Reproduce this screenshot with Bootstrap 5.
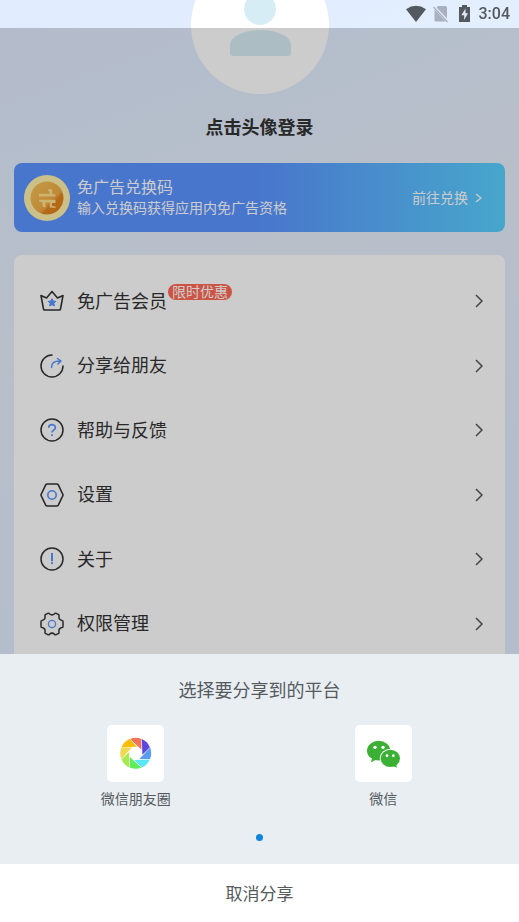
<!DOCTYPE html>
<html lang="zh-CN">
<head>
<meta charset="utf-8">
<meta name="viewport" content="width=device-width, initial-scale=1">
<title>我的</title>
<link href="https://cdn.jsdelivr.net/npm/bootstrap@5.3.0/dist/css/bootstrap.min.css" rel="stylesheet">
<style>
  body { font-family: "Noto Sans CJK SC", sans-serif; color: #333; line-height: 1.5; }
  a, button { color: inherit; }
  .app { background: linear-gradient(160deg, #e0ebff 0%, #e3eefe 18%, #e6effc 32%, #e2edff 60%, #e1edff 100%); }
  .status { height: 28px; font: 500 16px/28px Roboto, sans-serif; color: #54585f; padding-right: 9px; }
  .scrim { position: fixed; inset: 28px 0 0; background: rgba(0, 0, 0, .2); }
  .profile { margin-top: -44px; padding: 0 14px; }
  .avatar { width: 138px; height: 138px; }
  .avatar svg { display: block; width: 100%; height: 100%; }
  .name { font-size: 18px; line-height: 28px; margin: 18px 0 23px; }
  .banner { height: 69px; border-radius: 8px; padding: 0 23px 0 10px; gap: 7px;
            background: linear-gradient(90deg, #5a94ff 0%, #5a94ff 50%, #5aaaff 68%, #59d0ff 100%); }
  .banner-label { padding-bottom: 2px; }
  .banner-title { font-size: 16px; line-height: 21px; }
  .banner-text { font-size: 14px; line-height: 20px; }
  .menu-card { margin-top: 23px; padding: 14px 0; border-radius: 8px; }
  .menu-rows { height: 387px; grid-auto-rows: 1fr; }
  .menu-row { padding: 0 22px 0 26px; font-size: 18px; gap: 13px; }
  .menu-label { padding-bottom: 2px; }
  .tag { font-size: 14px; line-height: 14px; padding: 0 4px 2px; margin: 0 0 18px -12px; background: #ff6a55; }
  .sheet { background: #e9eef3; color: #555a5e; }
  .sheet-title { font-size: 18px; line-height: 28px; padding-top: 21px; margin-bottom: 22px; }
  .targets { padding: 0 12px; }
  .target { font-size: 14px; line-height: 20px; gap: 6px; }
  .tile { width: 57px; height: 57px; border-radius: 5px; }
  .dot { width: 7px; height: 7px; margin: 26px auto 23px; background: #0a86df; }
  .cancel { height: 58px; font-size: 17px; color: #555a5e; }
</style>
<script src="https://cdn.jsdelivr.net/npm/bootstrap@5.3.0/dist/js/bootstrap.bundle.min.js"></script>
</head>
<body>
<div class="app vh-100 overflow-hidden">

  <main class="profile">
    <div class="avatar rounded-circle bg-white mx-auto overflow-hidden">
      <svg viewBox="0 0 138 138" fill="#d7edf6" aria-hidden="true">
        <circle cx="69" cy="53" r="16"/>
        <path d="M39 97V89c0-9 15-15 30.500-15S100 80 100 89v8q0 3-3 3H42q-3 0-3-3z"/>
      </svg>
    </div>
    <h1 class="name fw-bold text-center">点击头像登录</h1>

    <a href="#" class="banner d-flex align-items-center text-white text-decoration-none">
      <svg width="46" height="46" viewBox="0 0 46 46" aria-hidden="true">
        <defs><linearGradient id="coin" x1="0" y1="0" x2="1" y2="1">
          <stop offset="0" stop-color="#f5c35a"/><stop offset=".6" stop-color="#f0ab45"/><stop offset=".68" stop-color="#e08420"/><stop offset="1" stop-color="#e08214"/>
        </linearGradient></defs>
        <circle cx="23" cy="23" r="23" fill="#fff1ac"/>
        <circle cx="23" cy="23" r="16.500" fill="url(#coin)"/>
        <path d="M15 18.800H25.500V16.800L23.500 15.500 25 13.800 28.200 14.800V18.800L31.500 19.500V21.500H15z M31.500 28H31 28V31L31.500 31.500V33L25.800 32.500V27.500H21.500V32.500L18.500 31.500V27.500L15 26.500V24.800H31.500z" fill="#ffe08c"/>
      </svg>
      <span class="banner-label flex-grow-1">
        <span class="banner-title d-block">免广告兑换码</span>
        <span class="banner-text d-block">输入兑换码获得应用内免广告资格</span>
      </span>
      <span class="banner-label banner-text">前往兑换</span>
      <svg width="7" height="10" viewBox="0 0 7 10" fill="none" stroke="#fff" stroke-width="1.400" aria-hidden="true"><path d="M1 1l5 4-5 4"/></svg>
    </a>

    <nav class="menu-card bg-white" aria-label="菜单">
      <div class="menu-rows d-grid">
        <a href="#" class="menu-row d-flex align-items-center text-decoration-none">
          <svg width="24" height="24" viewBox="0 0 24 24" fill="none" stroke="#333" stroke-width="1.600" stroke-linejoin="round" aria-hidden="true"><path d="M1 6.500l5.500 2.500L12 2.500 17.500 9 23 6.500l-2.500 13.500q-.2 1-1.200 1H4.700q-1 0-1.200-1z"/><path d="M12 9.700l1.200 2.300 2.600.4-1.900 1.900.5 2.600-2.400-1.200-2.400 1.200.5-2.600-1.900-1.900 2.600-.4z" fill="#5a94ff" stroke="#5a94ff" stroke-width="1"/></svg>
          <span class="menu-label">免广告会员</span><span class="tag rounded-pill text-white">限时优惠</span>
          <svg class="ms-auto" width="8" height="14" viewBox="0 0 8 14" fill="none" stroke="#555" stroke-width="1.500" aria-hidden="true"><path d="M1 1l6 6-6 6"/></svg>
        </a>
        <a href="#" class="menu-row d-flex align-items-center text-decoration-none">
          <svg width="24" height="24" viewBox="0 0 24 24" fill="none" stroke="#333" stroke-width="1.500" stroke-linecap="round" aria-hidden="true"><path d="M12 1a11 11 0 1 0 11 11"/><path d="M11.500 13.500C11.300 9 14 7 20 7M17.500 4.500L21 7l-3 3" stroke="#5a94ff" stroke-linejoin="round"/></svg>
          <span class="menu-label">分享给朋友</span>
          <svg class="ms-auto" width="8" height="14" viewBox="0 0 8 14" fill="none" stroke="#555" stroke-width="1.500" aria-hidden="true"><path d="M1 1l6 6-6 6"/></svg>
        </a>
        <a href="#" class="menu-row d-flex align-items-center text-decoration-none">
          <svg width="24" height="24" viewBox="0 0 24 24" fill="none" stroke="#333" stroke-width="1.500" aria-hidden="true"><circle cx="12" cy="12" r="11"/><path d="M8.700 9.800C8.700 5.600 15.400 5.600 15.400 9.600c0 2.500-3.400 2.600-3.400 5M12 16.200v1.800" stroke="#5a94ff" stroke-width="1.700"/></svg>
          <span class="menu-label">帮助与反馈</span>
          <svg class="ms-auto" width="8" height="14" viewBox="0 0 8 14" fill="none" stroke="#555" stroke-width="1.500" aria-hidden="true"><path d="M1 1l6 6-6 6"/></svg>
        </a>
        <a href="#" class="menu-row d-flex align-items-center text-decoration-none">
          <svg width="24" height="24" viewBox="0 0 24 24" fill="none" stroke="#333" stroke-width="1.600" stroke-linejoin="round" aria-hidden="true"><path d="M7.200 1h9.600q1 0 1.500.9l4.400 9.100q.5 1 0 2l-4.400 9.100q-.5.900-1.500.900H7.200q-1 0-1.500-.9L1.300 13q-.5-1 0-2l4.400-9.100Q6.200 1 7.200 1z"/><circle cx="12" cy="12" r="4.200" stroke="#5a94ff"/></svg>
          <span class="menu-label">设置</span>
          <svg class="ms-auto" width="8" height="14" viewBox="0 0 8 14" fill="none" stroke="#555" stroke-width="1.500" aria-hidden="true"><path d="M1 1l6 6-6 6"/></svg>
        </a>
        <a href="#" class="menu-row d-flex align-items-center text-decoration-none">
          <svg width="24" height="24" viewBox="0 0 24 24" fill="none" stroke="#333" stroke-width="1.500" aria-hidden="true"><circle cx="12" cy="12" r="11"/><path d="M12 6v8.200M12 15.300v1.700" stroke="#5a94ff" stroke-width="2"/></svg>
          <span class="menu-label">关于</span>
          <svg class="ms-auto" width="8" height="14" viewBox="0 0 8 14" fill="none" stroke="#555" stroke-width="1.500" aria-hidden="true"><path d="M1 1l6 6-6 6"/></svg>
        </a>
        <a href="#" class="menu-row d-flex align-items-center text-decoration-none">
          <svg width="24" height="24" viewBox="0 0 24 24" fill="none" stroke="#333" stroke-width="1.500" stroke-linejoin="round" aria-hidden="true"><path d="M8.300 1.200Q9 1 9.400 1.700 12 4.100 14.600 1.700 15 1 15.700 1.200L18.700 2.700Q19.300 3.200 19 4 18.300 7.600 22 8.400q1 .3 1 1.200v4.800q0 .9-1 1.200-3.700.8-3 4.400.3.800-.3 1.300l-3 1.500q-.7.200-1.100-.5-2.600-2.400-5.200 0-.4.700-1.100.5l-3-1.500Q4.700 20.800 5 20 5.700 16.400 2 15.600q-1-.3-1-1.200V9.600q0-.9 1-1.200Q5.700 7.600 5 4q-.3-.8.300-1.300z"/><circle cx="12" cy="12" r="3.600" stroke="#5a94ff" stroke-width="1.300"/></svg>
          <span class="menu-label">权限管理</span>
          <svg class="ms-auto" width="8" height="14" viewBox="0 0 8 14" fill="none" stroke="#555" stroke-width="1.500" aria-hidden="true"><path d="M1 1l6 6-6 6"/></svg>
        </a>
      </div>
    </nav>
  </main>

  <div class="scrim"></div>

  <header class="status fixed-top d-flex align-items-center justify-content-end">
    <svg width="65" height="20" viewBox="0 0 65 20" aria-hidden="true">
      <path d="M0 5.200Q10 -1.500 20 5.200L10 18z" fill="#54585f"/>
      <path d="M32 2H39.500Q41 2 41 3.500V14.500L30.500 3.500z M28.500 5.500V16Q28.500 17.500 30 17.500H39.800z" fill="#a9b1bf"/>
      <path d="M27.500 3L41.500 18" stroke="#a9b1bf" stroke-width="1.300"/>
      <path d="M53 3h3V1h5v2h3v15H53z" fill="#54585f"/>
      <path d="M59.500 4.500L55.300 11.300H58.200V16L62 9.300H59.500z" fill="#dfe9fb"/>
    </svg>
    <span class="ms-2">3:04</span>
  </header>

  <section class="sheet fixed-bottom" role="dialog" aria-labelledby="share-title">
    <h2 class="sheet-title fw-normal text-center" id="share-title">选择要分享到的平台</h2>
    <div class="targets row g-0">
      <div class="col-6 d-flex justify-content-center">
        <button type="button" class="target border-0 bg-transparent p-0 d-flex flex-column align-items-center">
          <svg class="tile bg-white" viewBox="0 0 57 57" aria-hidden="true">
            <defs><path id="blade" d="M-5.700-14.400A15.500 15.500 0 0 1 5.700-14.400V-3.700z"/></defs>
            <g transform="translate(28.700 28.300)">
              <use href="#blade" fill="#f0735a"/>
              <use href="#blade" fill="#5b48e0" transform="rotate(45)"/>
              <use href="#blade" fill="#5a9cee" transform="rotate(90)"/>
              <use href="#blade" fill="#5ae6f5" transform="rotate(135)"/>
              <use href="#blade" fill="#5fee5a" transform="rotate(180)"/>
              <use href="#blade" fill="#a8ea50" transform="rotate(225)"/>
              <use href="#blade" fill="#f0d850" transform="rotate(270)"/>
              <use href="#blade" fill="#fbbc05" transform="rotate(315)"/>
            </g>
          </svg>
          <span>微信朋友圈</span>
        </button>
      </div>
      <div class="col-6 d-flex justify-content-center">
        <button type="button" class="target border-0 bg-transparent p-0 d-flex flex-column align-items-center">
          <svg class="tile bg-white" viewBox="0 0 171 171" aria-hidden="true">
            <g fill="#3cb034">
              <ellipse cx="71" cy="77" rx="35" ry="29.500"/><path d="M51 98L48 112 63 104z"/>
              <ellipse cx="106" cy="100" rx="31.500" ry="28.500" fill="#fff"/>
              <ellipse cx="106" cy="100" rx="29" ry="26"/><path d="M114 123L126 128 123 116z"/>
            </g>
            <g fill="#fff"><circle cx="60" cy="67" r="5"/><circle cx="84" cy="67" r="5"/><circle cx="96" cy="92" r="4"/><circle cx="115" cy="92" r="4"/></g>
          </svg>
          <span>微信</span>
        </button>
      </div>
    </div>
    <div class="dot rounded-circle"></div>
    <button type="button" class="cancel btn bg-white rounded-0 border-0 w-100 p-0">取消分享</button>
  </section>
</div>
</body>
</html>
